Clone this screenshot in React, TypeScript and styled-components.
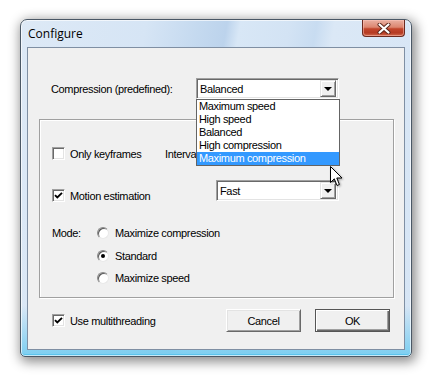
import styled, { createGlobalStyle } from "styled-components";

const GlobalStyle = createGlobalStyle`
  html, body {
    margin: 0;
    background: #fff;
  }
  body {
    width: 438px;
    height: 382px;
    overflow: hidden;
    font-family: "Liberation Sans", Arial, sans-serif;
    font-size: 11px;
    letter-spacing: -0.35px;
    color: #000;
  }
`;

const Window = styled.div`
  position: relative;
  box-sizing: border-box;
  margin: 19px 0 0 20px;
  width: 392px;
  height: 338px;
  display: flex;
  flex-direction: column;
  padding: 0 6px 6px;
  border: 1px solid #4b5866;
  border-radius: 7px 7px 5px 5px;
  background:
    linear-gradient(180deg, rgba(255, 255, 255, 0) 85%, rgba(120, 205, 240, 0.9) 99%),
    linear-gradient(
      100deg,
      #dde9f6 0%,
      #d6e5f5 28%,
      #c4d9ef 40%,
      #bcd3ec 46%,
      #d8e7f6 49%,
      #d3e3f4 60%,
      #c8dcf1 66%,
      #dbe8f6 70%,
      #d6e5f5 100%
    );
  box-shadow:
    inset 0 0 0 1px rgba(255, 255, 255, 0.65),
    inset 0 -2px 0 #5cc4ec,
    2px 3px 12px 2px rgba(0, 0, 0, 0.45);
`;

const TitleBar = styled.div`
  height: 27px;
  flex: none;
  display: flex;
  justify-content: space-between;
  align-items: flex-start;
`;

const Title = styled.span`
  margin: 6px 0 0 1px;
  font-family: "Open Sans", "Noto Sans", sans-serif;
  font-size: 12px;
  line-height: 15px;
  letter-spacing: 0;
  color: #000;
`;

const CloseButton = styled.div`
  box-sizing: border-box;
  width: 43px;
  height: 17px;
  display: flex;
  align-items: center;
  justify-content: center;
  border: 1px solid #6b2a1f;
  border-top: none;
  border-radius: 0 0 4px 4px;
  background: linear-gradient(180deg, #eab1a2 0%, #dc8670 45%, #c2462c 55%, #b53a22 80%, #d06a4c 100%);
  box-shadow: inset 0 0 0 1px rgba(255, 200, 190, 0.5);
`;

const Client = styled.div`
  box-sizing: border-box;
  width: 378px;
  height: 303px;
  border: 1px solid #7f8fa3;
  background: #f0f0f0;
  display: flex;
  flex-direction: column;
`;

const TopRow = styled.div`
  margin: 30px 0 0 23px;
  height: 21px;
  display: flex;
  align-items: center;
`;

const FieldLabel = styled.span<{ $width: number }>`
  width: ${(p) => p.$width}px;
  flex: none;
  white-space: nowrap;
`;

const Combo = styled.div<{ $width: number }>`
  position: relative;
  box-sizing: border-box;
  width: ${(p) => p.$width}px;
  height: 21px;
  flex: none;
  display: flex;
  align-items: center;
  justify-content: space-between;
  padding: 0 2px 0 3px;
  background: #fff;
  border: 1px solid;
  border-color: #a0a0a0 #fff #fff #a0a0a0;
  box-shadow: inset 1px 1px 0 #696969, inset -1px -1px 0 #e3e3e3;
`;

const DropButton = styled.div`
  box-sizing: border-box;
  width: 16px;
  height: 17px;
  display: flex;
  align-items: center;
  justify-content: center;
  background: #f0f0f0;
  border: 1px solid;
  border-color: #e3e3e3 #696969 #696969 #e3e3e3;
  box-shadow: inset 1px 1px 0 #fff, inset -1px -1px 0 #a0a0a0;
`;

const Arrow = styled.span`
  width: 0;
  height: 0;
  border-left: 4px solid transparent;
  border-right: 4px solid transparent;
  border-top: 4px solid #000;
`;

const DropList = styled.ul`
  position: absolute;
  top: calc(100% + 1px);
  left: -1px;
  z-index: 5;
  box-sizing: border-box;
  width: 144px;
  margin: 0;
  padding: 0;
  list-style: none;
  background: #fff;
  border: 1px solid #646464;
`;

const DropItem = styled.li<{ $selected?: boolean }>`
  height: 13px;
  line-height: 13px;
  padding-left: 2px;
  white-space: nowrap;
  background: ${(p) => (p.$selected ? "#3399ff" : "transparent")};
  color: ${(p) => (p.$selected ? "#fff" : "#000")};
`;

const Group = styled.div`
  box-sizing: border-box;
  margin: 20px 0 0 11px;
  width: 355px;
  height: 179px;
  border: 1px solid #a0a0a0;
  box-shadow: inset 1px 1px 0 #fff, 1px 1px 0 #fff;
  display: flex;
  flex-direction: column;
  padding-left: 12px;
`;

const Row = styled.div<{ $top: number; $height: number }>`
  margin-top: ${(p) => p.$top}px;
  height: ${(p) => p.$height}px;
  display: flex;
  align-items: center;
`;

const CheckCell = styled.label<{ $width?: number; $offset?: number }>`
  display: flex;
  align-items: center;
  gap: 5px;
  white-space: nowrap;
  flex: ${(p) => (p.$width ? "none" : "1")};
  width: ${(p) => (p.$width ? `${p.$width}px` : "auto")};
  align-self: ${(p) => (p.$offset ? "flex-start" : "center")};
  margin-top: ${(p) => p.$offset ?? 0}px;
`;

const Box = styled.span`
  box-sizing: border-box;
  width: 13px;
  height: 13px;
  flex: none;
  display: flex;
  align-items: center;
  justify-content: center;
  background: #fff;
  border: 1px solid;
  border-color: #a0a0a0 #fff #fff #a0a0a0;
  box-shadow: inset 1px 1px 0 #696969, inset -1px -1px 0 #e3e3e3;
`;

const ModeBlock = styled.div`
  margin-top: 21px;
  display: flex;
`;

const ModeLabel = styled.span`
  width: 45px;
  height: 22px;
  line-height: 22px;
  flex: none;
`;

const RadioList = styled.div`
  display: flex;
  flex-direction: column;
`;

const RadioRow = styled.label`
  height: 22.5px;
  display: flex;
  align-items: center;
  gap: 6px;
  white-space: nowrap;
`;

const RadioDot = styled.span<{ $checked?: boolean }>`
  box-sizing: border-box;
  width: 12px;
  height: 12px;
  flex: none;
  border-radius: 50%;
  display: flex;
  align-items: center;
  justify-content: center;
  background: #fff;
  border: 1px solid;
  border-color: #8a8a8a #e8e8e8 #e8e8e8 #8a8a8a;
  box-shadow: inset 1px 1px 0 #5a5a5a;

  &::after {
    content: "";
    width: 4px;
    height: 4px;
    border-radius: 50%;
    background: ${(p) => (p.$checked ? "#000" : "transparent")};
  }
`;

const BottomRow = styled.div`
  margin: 11px 14px 0 24px;
  height: 23px;
  display: flex;
  align-items: center;
  gap: 14px;
`;

const Button = styled.div<{ $default?: boolean }>`
  box-sizing: border-box;
  width: 75px;
  height: 23px;
  flex: none;
  display: flex;
  align-items: center;
  justify-content: center;
  background: #f0f0f0;
  border: 1px solid;
  border-color: ${(p) => (p.$default ? "#555" : "#fff #696969 #696969 #fff")};
  box-shadow: ${(p) =>
    p.$default
      ? "inset 1px 1px 0 #fff, inset -1px -1px 0 #696969, inset -2px -2px 0 #a0a0a0"
      : "inset 1px 1px 0 #e3e3e3, inset -1px -1px 0 #a0a0a0"};
`;

const Cursor = styled.svg`
  position: absolute;
  left: 309px;
  top: 146px;
  z-index: 10;
  filter: drop-shadow(1px 1px 1px rgba(0, 0, 0, 0.35));
`;

function CheckBox({ checked }: { checked?: boolean }) {
  return (
    <Box>
      {checked && (
        <svg width="9" height="9" viewBox="0 0 9 9">
          <path d="M1 4.2 L3.3 6.5 L8 1.8" fill="none" stroke="#000" strokeWidth="1.9" />
        </svg>
      )}
    </Box>
  );
}

const presets = ["Maximum speed", "High speed", "Balanced", "High compression", "Maximum compression"];

export default function App() {
  return (
    <>
      <GlobalStyle />
      <Window>
        <TitleBar>
          <Title>Configure</Title>
          <CloseButton>
            <svg width="14" height="11" viewBox="0 0 14 11">
              <path d="M2.5 1.5 L11.5 9.5 M11.5 1.5 L2.5 9.5" stroke="#5a2418" strokeWidth="4" strokeLinecap="round" />
              <path d="M2.5 1.5 L11.5 9.5 M11.5 1.5 L2.5 9.5" stroke="#fff" strokeWidth="2.2" strokeLinecap="round" />
            </svg>
          </CloseButton>
        </TitleBar>
        <Client>
          <TopRow>
            <FieldLabel $width={145}>Compression (predefined):</FieldLabel>
            <Combo $width={143}>
              <span>Balanced</span>
              <DropButton>
                <Arrow />
              </DropButton>
              <DropList>
                {presets.map((p, i) => (
                  <DropItem key={p} $selected={i === presets.length - 1}>
                    {p}
                  </DropItem>
                ))}
              </DropList>
            </Combo>
          </TopRow>

          <Group>
            <Row $top={27} $height={13}>
              <CheckCell $width={113}>
                <CheckBox />
                Only keyframes
              </CheckCell>
              <FieldLabel $width={60}>Interval:</FieldLabel>
            </Row>
            <Row $top={20} $height={21}>
              <CheckCell $width={164} $offset={9}>
                <CheckBox checked />
                Motion estimation
              </CheckCell>
              <Combo $width={123}>
                <span>Fast</span>
                <DropButton>
                  <Arrow />
                </DropButton>
              </Combo>
            </Row>
            <ModeBlock>
              <ModeLabel>Mode:</ModeLabel>
              <RadioList>
                <RadioRow>
                  <RadioDot />
                  Maximize compression
                </RadioRow>
                <RadioRow>
                  <RadioDot $checked />
                  Standard
                </RadioRow>
                <RadioRow>
                  <RadioDot />
                  Maximize speed
                </RadioRow>
              </RadioList>
            </ModeBlock>
          </Group>

          <BottomRow>
            <CheckCell>
              <CheckBox checked />
              Use multithreading
            </CheckCell>
            <Button>Cancel</Button>
            <Button $default>OK</Button>
          </BottomRow>
        </Client>
        <Cursor width="13" height="21" viewBox="0 0 13 21">
          <path
            d="M0.5 0.5 L0.5 16.5 L4.3 12.8 L7 19.5 L9.4 18.5 L6.8 12 L12 12 Z"
            fill="#fff"
            stroke="#000"
            strokeWidth="1"
            strokeLinejoin="miter"
          />
        </Cursor>
      </Window>
    </>
  );
}
